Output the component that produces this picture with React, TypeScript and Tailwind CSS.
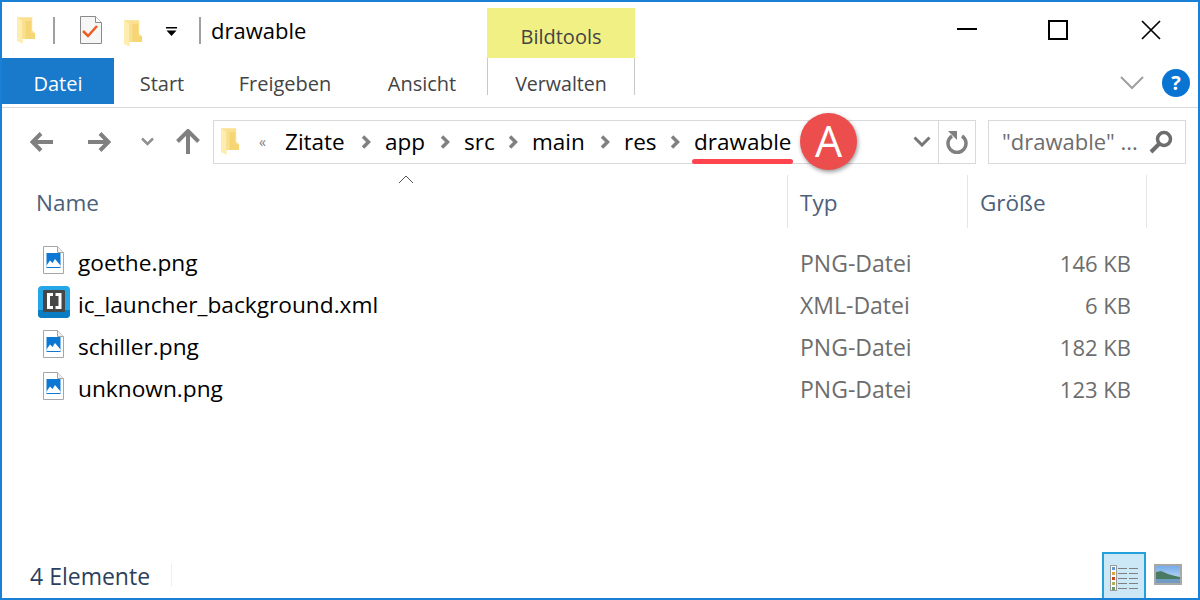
function FolderIcon({ className }: { className?: string }) {
  return (
    <svg className={className} width="20" height="28" viewBox="0 0 20 28">
      <path d="M0 0h16v14l3 3v6H0z" fill="#fbe08f" />
      <path d="M0 0l6 4v24l-6-3z" fill="#fdeeb0" />
      <path d="M6 4h9v13h4v6H6z" fill="#f6d574" />
      <path d="M6 4h3v19H6z" fill="#f9e08e" />
    </svg>
  );
}

function ImageFileIcon() {
  return (
    <svg width="21" height="28" viewBox="0 0 21 28">
      <path d="M.5.5h14l6 6v21H.5z" fill="#fff" stroke="#a6a6a6" />
      <path d="M14.500.5v6h6" fill="#eeeeee" stroke="#a6a6a6" />
      <rect x="3.500" y="7" width="14" height="15" fill="#0c78d4" />
      <path d="M3.500 19.500l3.500-5 2.500 2.500 2.500-4 5.500 6.500v1.500h-14z" fill="#fff" />
    </svg>
  );
}

function BracketsIcon() {
  return (
    <svg width="32" height="32" viewBox="0 0 32 32">
      <rect width="32" height="32" rx="4" fill="#25a6e6" />
      <path d="M0 24h32v4a4 4 0 0 1-4 4H4a4 4 0 0 1-4-4z" fill="#0a7cc4" />
      <rect x="5" y="4" width="22" height="22" rx="1" fill="#474747" />
      <path d="M15 8.500h-4.500v13H15M17.500 8.500H22v13h-4.500" fill="none" stroke="#fff" strokeWidth="3" />
    </svg>
  );
}

function Crumb() {
  return (
    <svg width="10" height="14" viewBox="0 0 10 14" className="mx-[14.5px] shrink-0">
      <path d="M2 1.500 7.500 7 2 12.500" fill="none" stroke="#808080" strokeWidth="3.500" />
    </svg>
  );
}

const files = [
  { name: "goethe.png", type: "PNG-Datei", size: "146 KB" },
  { name: "ic_launcher_background.xml", type: "XML-Datei", size: "6 KB" },
  { name: "schiller.png", type: "PNG-Datei", size: "182 KB" },
  { name: "unknown.png", type: "PNG-Datei", size: "123 KB" },
];

const listRows = [
  { y: 1, color: "#5b9bd5" },
  { y: 6, color: "#d9a441" },
  { y: 11, color: "#c8481e" },
  { y: 16, color: "#b0b050" },
  { y: 21, color: "#6a9a6a" },
];

export default function App() {
  return (
    <div className="relative flex h-[600px] w-[1200px] flex-col overflow-hidden border-2 border-[#1a80d6] bg-white font-['Open_Sans',sans-serif] text-[22px] text-black">
      {/* title bar */}
      <div className="flex h-[56px] shrink-0">
        <div className="flex w-[485px] items-center pl-[15px]">
          <FolderIcon className="h-[27px] w-[19px]" />
          <div className="ml-[17px] h-[27px] w-[2px] bg-[#a0a0a0]" />
          <svg className="ml-[25px]" width="22" height="28" viewBox="0 0 22 28">
            <path d="M.5.5h15l6 6v21H.5z" fill="#f6f6f6" stroke="#8a8a8a" />
            <path d="M15.500.5v6h6" fill="#fff" stroke="#8a8a8a" />
            <path d="M3 15l5 5 9-10" fill="none" stroke="#f05a22" strokeWidth="2.500" />
          </svg>
          <FolderIcon className="ml-[22px] mt-[6px] h-[27px] w-[19px]" />
          <svg className="ml-[23px] mt-[4px]" width="11" height="10" viewBox="0 0 11 10">
            <path d="M0 0h11v1.500H0zM.5 3.500h10L5.500 9z" fill="#000" />
          </svg>
          <div className="ml-[22px] h-[27px] w-[2px] bg-[#a0a0a0]" />
          <span className="ml-[10px]">drawable</span>
        </div>
        <div className="mt-[6px] flex h-[50px] w-[148px] items-center justify-center bg-[#f1f084] pt-[8px] text-[20px] text-[#444]">
          Bildtools
        </div>
        <div className="flex flex-1 items-start justify-end">
          <div className="flex h-[56px] items-center pr-[37px]">
            <svg width="20" height="20" viewBox="0 0 20 20" className="mr-[71px]">
              <path d="M0 9h20" stroke="#000" strokeWidth="2" />
            </svg>
            <svg width="20" height="20" viewBox="0 0 20 20" className="mr-[73px]">
              <rect x="1" y="1" width="18" height="18" fill="none" stroke="#000" strokeWidth="2" />
            </svg>
            <svg width="20" height="20" viewBox="0 0 20 20">
              <path d="M1 1l18 18M19 1 1 19" stroke="#000" strokeWidth="1.700" />
            </svg>
          </div>
        </div>
      </div>

      {/* ribbon tabs */}
      <div className="flex h-[50px] shrink-0 border-b border-[#dadada] text-[20px] text-[#444]">
        <div className="flex h-[46px] w-[112px] items-center justify-center bg-[#1979ca] pt-[5px] text-white">Datei</div>
        <div className="flex h-[46px] w-[96px] items-center justify-center pt-[5px]">Start</div>
        <div className="flex h-[46px] w-[150px] items-center justify-center pt-[5px]">Freigeben</div>
        <div className="flex h-[46px] w-[124px] items-center justify-center pt-[5px]">Ansicht</div>
        <div className="ml-[3px] flex h-[37px] w-[148px] items-start justify-center border-x border-[#c8c8c8] pt-[13px] text-[19.6px] leading-[26px]">
          Verwalten
        </div>
        <div className="flex h-[46px] flex-1 items-center justify-end pr-[8px] pt-[3px]">
          <svg width="24" height="14" viewBox="0 0 24 14" className="mr-[18px]">
            <path d="M1 1l11 11L23 1" fill="none" stroke="#a0a0a0" strokeWidth="2" />
          </svg>
          <div className="flex h-[28px] w-[28px] items-center justify-center rounded-full bg-[#0a74d2] text-[20px] font-bold text-white">
            ?
          </div>
        </div>
      </div>

      {/* address bar */}
      <div className="flex h-[67px] shrink-0 items-center">
        <div className="flex w-[211px] items-center pl-[28px]">
          <svg width="23" height="20" viewBox="0 0 23 20">
            <path d="M11 1.500 2.500 10l8.500 8.500M3 10h20" fill="none" stroke="#808080" strokeWidth="4" />
          </svg>
          <svg className="ml-[35px]" width="23" height="20" viewBox="0 0 23 20">
            <path d="M12 1.500 20.500 10 12 18.500M20 10H0" fill="none" stroke="#808080" strokeWidth="4" />
          </svg>
          <svg className="ml-[30px]" width="13" height="9" viewBox="0 0 13 9">
            <path d="M1 1.500 6.500 7 12 1.500" fill="none" stroke="#909090" strokeWidth="2.500" />
          </svg>
          <svg className="ml-[22px]" width="24" height="25" viewBox="0 0 24 25">
            <path d="M12 25V3M1.500 12.500 12 2l10.500 10.500" fill="none" stroke="#808080" strokeWidth="4" />
          </svg>
        </div>
        <div className="flex h-[44px] w-[763px] items-center border border-[#d9d9d9] text-[22.5px]">
          <FolderIcon className="ml-[7px] h-[27px] w-[19px]" />
          <span className="ml-[19px] w-[26px] text-[14px] leading-none text-[#808080]">«</span>
          <span className="w-[61px]">Zitate</span>
          <Crumb />
          <span className="w-[40px]">app</span>
          <Crumb />
          <span className="w-[29px]">src</span>
          <Crumb />
          <span className="w-[53px]">main</span>
          <Crumb />
          <span className="w-[31px]">res</span>
          <Crumb />
          <span>drawable</span>
          <svg className="ml-auto mr-[7px]" width="18" height="11" viewBox="0 0 18 11">
            <path d="M1.500 1.500 9 9l7.500-7.500" fill="none" stroke="#777" strokeWidth="3" />
          </svg>
          <div className="flex h-full w-[37px] items-center justify-center border-l border-[#d9d9d9]">
            <svg width="22" height="24" viewBox="0 0 22 24">
              <path d="M6 6a9 9 0 1 0 10 0" fill="none" stroke="#808080" strokeWidth="3.500" />
              <path d="M2 1h9v9z" fill="#808080" />
            </svg>
          </div>
        </div>
        <div className="ml-[12px] flex h-[44px] w-[198px] items-center justify-between border border-[#d9d9d9] pl-[13px] pr-[12px] text-[#6d6d6d]">
          <span>"drawable" ...</span>
          <svg width="24" height="24" viewBox="0 0 24 24">
            <circle cx="15" cy="9" r="6.500" fill="none" stroke="#6d6d6d" strokeWidth="3.500" />
            <path d="M10 14 2 22" stroke="#6d6d6d" strokeWidth="4" />
          </svg>
        </div>
      </div>

      {/* column headers */}
      <div className="flex h-[53px] shrink-0 items-center text-[22.5px] text-[#4c607a]">
        <div className="flex h-full w-[785px] items-center pl-[34px] pt-[3px]">Name</div>
        <div className="flex h-full w-[180px] items-center border-l border-[#e5e5e5] pl-[12px] pt-[3px]">Typ</div>
        <div className="flex h-full w-[180px] items-center border-x border-[#e5e5e5] pl-[12px] pt-[3px]">Größe</div>
      </div>

      {/* file list */}
      <div className="flex flex-1 flex-col pt-[14px]">
        {files.map((f) => (
          <div key={f.name} className="flex h-[42px] items-center">
            <div className="flex w-[785px] items-center">
              <div className="mb-[6px] flex w-[76px] justify-center pl-[27px]">
                {f.name.endsWith(".xml") ? <BracketsIcon /> : <ImageFileIcon />}
              </div>
              <span className="text-[22.7px]">{f.name}</span>
            </div>
            <div className="w-[233px] pl-[13px] text-[23px] text-[#6d6d6d]">{f.type}</div>
            <div className="w-[111px] text-right text-[#6d6d6d]">{f.size}</div>
          </div>
        ))}
      </div>

      {/* status bar */}
      <div className="flex h-[46px] shrink-0 items-center pl-[28px] text-[23px] text-[#2d3f5e]">
        <span className="w-[141px] pt-[3px]">4 Elemente</span>
        <div className="h-[22px] w-px bg-[#eeeeee]" />
        <div className="ml-auto flex h-full w-[44px] items-center justify-center border-2 border-b-0 border-[#26a0da] bg-[#cce8f6] pt-[4px]">
          <svg width="28" height="27" viewBox="0 0 28 27">
            <rect x=".5" y=".5" width="6" height="25" fill="#fff" stroke="#9a9a9a" />
            {listRows.map((r) => (
              <g key={r.y}>
                <rect x="2" y={r.y + 1} width="3" height="3" fill={r.color} />
                <path d={`M8 ${r.y + 2.5}h9M19 ${r.y + 2.5}h9`} stroke="#808080" />
              </g>
            ))}
          </svg>
        </div>
        <svg className="ml-[8px] mr-[16px] mb-[2px]" width="28" height="21" viewBox="0 0 28 21">
          <defs>
            <linearGradient id="sky" x1="0" y1="0" x2="0" y2="1">
              <stop offset="0" stopColor="#6fa8ec" />
              <stop offset="1" stopColor="#d8e8f5" />
            </linearGradient>
          </defs>
          <rect x="1" y="1" width="26" height="19" fill="url(#sky)" stroke="#a8a8a8" strokeWidth="2" />
          <path d="M2 8l5-1 7 3 7 2 5 1v2H2z" fill="#4a7a62" />
          <rect x="2" y="15" width="24" height="4" fill="#6f9cc0" />
        </svg>
      </div>

      {/* sort arrow */}
      <svg className="absolute left-[396px] top-[173px]" width="16" height="9" viewBox="0 0 16 9">
        <path d="M1 8l7-7 7 7" fill="none" stroke="#555" />
      </svg>

      {/* annotation */}
      <div className="absolute left-[690px] top-[157px] h-[5px] w-[101px] rounded-full bg-[#ff4450]" />
      <div className="absolute left-[798px] top-[111px] flex h-[57px] w-[57px] items-center justify-center rounded-full bg-[#ec4e4e] text-[43px] text-white shadow-[1px_2px_4px_rgba(0,0,0,0.4)]">
        A
      </div>
    </div>
  );
}
